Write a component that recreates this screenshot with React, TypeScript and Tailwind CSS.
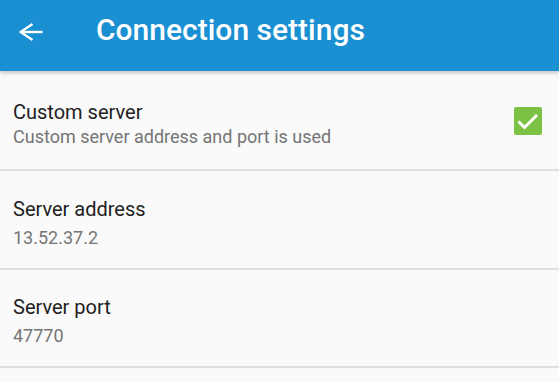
import React from "react";

function Title({ children }: { children: React.ReactNode }) {
  return <div className="text-[20px] leading-[26px] text-[#212121]">{children}</div>;
}

export default function App() {
  return (
    <div className="h-[382px] w-[559px] overflow-hidden bg-[#fafafa]" style={{ fontFamily: "Roboto, 'Noto Sans', sans-serif" }}>
      <div className="relative z-10 flex h-[71px] items-center bg-[#1a8fd1] pb-[12px] shadow-[0_2px_4px_rgba(0,0,0,0.22)]">
        <div className="flex w-[96px] items-center pl-[19px] pt-[5px]">
          <svg width="24" height="18" viewBox="0 0 24 18" fill="none" stroke="white" strokeWidth="2.4" strokeLinejoin="miter">
            <path d="M23.5 9H1.5" />
            <path d="M13.5 1L1.6 9l11.9 8" />
          </svg>
        </div>
        <div className="text-[30px] font-medium leading-[30px] text-white">Connection settings</div>
      </div>

      <div className="flex h-[100px] items-start justify-between border-b-2 border-[#e0e0e0] pl-[13px] pr-[17px]">
        <div className="flex flex-col pt-[28px]">
          <Title>Custom server</Title>
          <div className="text-[18px] leading-[24px] text-[#757575]">Custom server address and port is used</div>
        </div>
        <div className="mt-[36px] flex h-[28px] w-[28px] items-center justify-center rounded-[2px] bg-[#7bc143]">
          <svg width="28" height="28" viewBox="0 0 28 28" fill="none" stroke="white" strokeWidth="3" strokeLinecap="square">
            <path d="M5.5 15.5L10.5 20.5L22 9" />
          </svg>
        </div>
      </div>

      <div className="flex h-[99px] flex-col border-b-2 border-[#e0e0e0] pl-[13px] pt-[25px]">
        <Title>Server address</Title>
        <div className="mt-[2px] text-[18px] leading-[28px] text-[#757575]">13.52.37.2</div>
      </div>

      <div className="flex h-[98px] flex-col border-b-2 border-[#e0e0e0] pl-[13px] pt-[24px]">
        <Title>Server port</Title>
        <div className="mt-[2px] text-[18px] leading-[28px] text-[#757575]">47770</div>
      </div>
    </div>
  );
}
